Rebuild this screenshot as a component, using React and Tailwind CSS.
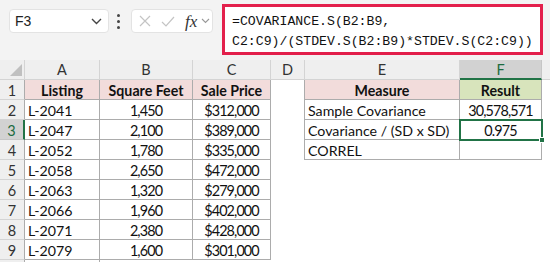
import React from "react";

const GRID = "grid grid-cols-[25px_75px_93px_78px_34px_155px_82px_1fr] auto-rows-[20px]";
const cellFont = "font-['Lato','Liberation_Sans',sans-serif] text-[14.2px] leading-none text-[#111] pt-[3px]";
const numFont = "font-['Lato','Liberation_Sans',sans-serif] text-[14.4px] tracking-[-0.9px] leading-none text-[#111] pt-[3px]";

const rows = [
  ["L-2041", "1,450", "$312,000"],
  ["L-2047", "2,100", "$389,000"],
  ["L-2052", "1,780", "$335,000"],
  ["L-2058", "2,650", "$472,000"],
  ["L-2063", "1,320", "$279,000"],
  ["L-2066", "1,960", "$402,000"],
  ["L-2071", "2,380", "$428,000"],
  ["L-2079", "1,600", "$301,000"],
];
const eCol = ["Sample Covariance", "Covariance / (SD x SD)", "CORREL"];
const fCol = ["30,578,571", "0.975", ""];

function Toolbar() {
  return (
    <div className="h-[60px] bg-[#f3f3f3] relative">
      <div className="absolute left-[9px] top-[9px] w-[100px] h-[24px] bg-white rounded-[4px] border border-[#e3e3e3] flex items-center justify-between pl-[5px] pr-[6px]">
        <span className="font-['Liberation_Sans',sans-serif] text-[14px] text-[#222]">F3</span>
        <svg width="11" height="7" viewBox="0 0 11 7" fill="none" stroke="#444" strokeWidth="1.4"><path d="M1 1l4.5 4.5L10 1" /></svg>
      </div>
      <div className="absolute left-[117px] top-[14px] flex flex-col gap-[3px]">
        <div className="w-[3px] h-[3px] rounded-full bg-[#444]" />
        <div className="w-[3px] h-[3px] rounded-full bg-[#444]" />
        <div className="w-[3px] h-[3px] rounded-full bg-[#444]" />
      </div>
      <div className="absolute left-[131px] top-[9px] w-[82px] h-[24px] bg-white rounded-[4px] border border-[#e3e3e3] flex items-center pl-[7px]">
        <svg width="12" height="12" viewBox="0 0 12 12" fill="none" stroke="#c4c4c4" strokeWidth="1.2"><path d="M1 1l10 10M11 1L1 11" /></svg>
        <svg className="ml-[10px]" width="14" height="11" viewBox="0 0 14 11" fill="none" stroke="#c4c4c4" strokeWidth="1.2"><path d="M1 6l4 4L13 1" /></svg>
        <span className="ml-[10px] font-['Liberation_Serif',serif] italic text-[17px] text-[#333] leading-none">fx</span>
        <svg className="ml-[4px]" width="9" height="6" viewBox="0 0 9 6" fill="none" stroke="#999" strokeWidth="1.1"><path d="M1 1l3.5 3.5L8 1" /></svg>
      </div>
      <div className="absolute left-[222px] top-[4px] w-[321px] h-[51px] bg-white border-[3px] border-[#e3204c] pl-[7px] pt-[5px]">
        <div className="font-['Liberation_Mono',monospace] text-[13.2px] leading-[20px] text-[#111]">
          <div>=COVARIANCE.S(B2:B9,</div>
          <div>C2:C9)/(STDEV.S(B2:B9)*STDEV.S(C2:C9))</div>
        </div>
      </div>
    </div>
  );
}

function ColHeader({ children, sel }) {
  return (
    <div
      className={
        "flex items-center justify-center border-r border-b pt-[2px] font-['Lato','Liberation_Sans',sans-serif] text-[14.5px] leading-none " +
        (sel
          ? "bg-[#d2d2d2] text-[#1d6b40] border-r-[#c6c6c6] border-b-2 border-b-[#217346]"
          : "bg-[#efefef] text-[#333] border-[#d4d4d4]")
      }
    >
      {children}
    </div>
  );
}

function RowHeader({ n, sel }) {
  return (
    <div
      className={
        "flex items-center justify-center border-b pt-[3px] font-['Lato','Liberation_Sans',sans-serif] text-[14.5px] leading-none " +
        (sel
          ? "bg-[#d2d2d2] text-[#1d6b40] border-b-[#c6c6c6] border-r-2 border-r-[#217346]"
          : "bg-[#efefef] text-[#333] border-b-[#d4d4d4] border-r border-r-[#acacac]")
      }
    >
      {n}
    </div>
  );
}

export default function App() {
  const tb = "border-r border-b border-[#acacac]";
  return (
    <div className="w-[550px] h-[262px] overflow-hidden bg-white">
      <Toolbar />
      <div className="relative">
        <div className={GRID}>
          <div className="bg-[#efefef] border-r border-b border-[#d4d4d4] relative">
            <svg className="absolute left-[10px] top-[4px]" width="12" height="12" viewBox="0 0 12 12"><path d="M12 0L12 12L0 12Z" fill="#c0c0c0" /></svg>
          </div>
          <ColHeader>A</ColHeader>
          <ColHeader>B</ColHeader>
          <ColHeader>C</ColHeader>
          <ColHeader>D</ColHeader>
          <ColHeader>E</ColHeader>
          <ColHeader sel>F</ColHeader>
          <div className="bg-[#efefef] border-b border-[#d4d4d4]" />

          <RowHeader n={1} />
          <div className={`${tb} bg-[#f2dcdb] flex items-center justify-center font-bold ${cellFont}`}>Listing</div>
          <div className={`${tb} bg-[#f2dcdb] flex items-center justify-center font-bold ${cellFont}`}>Square Feet</div>
          <div className={`${tb} bg-[#f2dcdb] flex items-center justify-center font-bold ${cellFont}`}>Sale Price</div>
          <div className="border-r border-[#acacac]" />
          <div className={`${tb} bg-[#f2dcdb] flex items-center justify-center font-bold ${cellFont}`}>Measure</div>
          <div className={`${tb} bg-[#d8e4bc] flex items-center justify-center font-bold ${cellFont}`}>Result</div>
          <div />

          {rows.map((r, i) => (
            <React.Fragment key={i}>
              <RowHeader n={i + 2} sel={i === 1} />
              <div className={`${tb} flex items-center pl-[3px] ${cellFont}`}>{r[0]}</div>
              <div className={`${tb} flex items-center justify-center ${numFont}`}>{r[1]}</div>
              <div className={`${tb} flex items-center justify-center ${numFont}`}>{r[2]}</div>
              {i < 3 ? (
                <>
                  <div className="border-r border-[#acacac]" />
                  <div className={`${tb} flex items-center pl-[3px] ${cellFont}`}>{eCol[i]}</div>
                  <div className={`${tb} flex items-center justify-center ${numFont}`}>{fCol[i]}</div>
                  <div />
                </>
              ) : (
                <>
                  <div />
                  <div />
                  <div />
                  <div />
                </>
              )}
            </React.Fragment>
          ))}
          <div className="bg-[#efefef] border-r border-[#acacac]" />
          <div className="border-r border-[#acacac]" />
        </div>
        <div className="absolute left-[459px] top-[59px] w-[84px] h-[22px] border-2 border-[#217346]" />
        <div className="absolute left-[539px] top-[77px] w-[6px] h-[6px] bg-[#217346] border border-white" />
      </div>
    </div>
  );
}
